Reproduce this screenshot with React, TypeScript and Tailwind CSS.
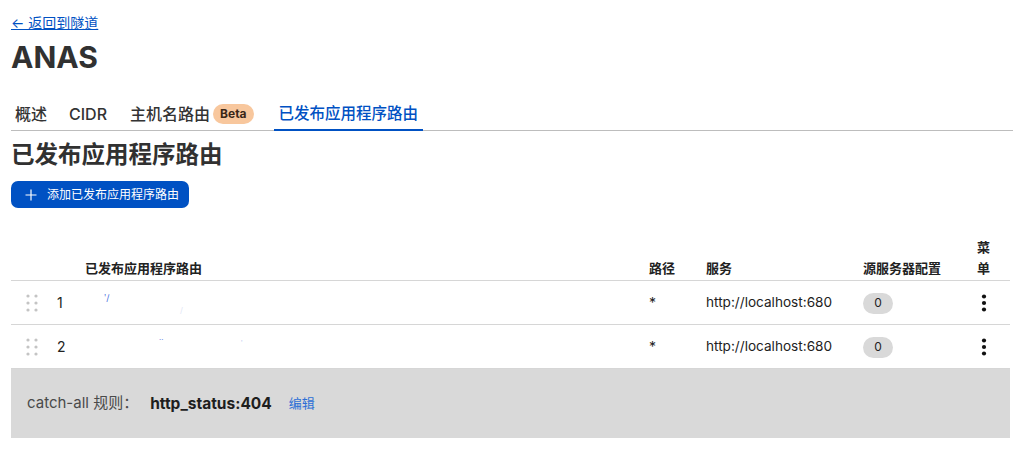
import React from "react";

const FONT = { fontFamily: 'Inter, "Noto Sans CJK SC", "Noto Sans", sans-serif' };

function DragHandle() {
  return (
    <svg width="12" height="18" viewBox="0 0 12 18" className="block">
      {[2, 9, 16].map((y) =>
        [2, 10].map((x) => <circle key={`${x}-${y}`} cx={x} cy={y} r="1.6" fill="#c4c4c4" />)
      )}
    </svg>
  );
}

function Kebab() {
  return (
    <svg width="6" height="18" viewBox="0 0 6 18" className="block">
      <circle cx="3" cy="2.5" r="2.1" fill="#111" />
      <circle cx="3" cy="9" r="2.1" fill="#111" />
      <circle cx="3" cy="15.5" r="2.1" fill="#111" />
    </svg>
  );
}

const cols = "grid grid-cols-[46px_28px_564px_57px_157px_114px_33px]";

function Row({ n, marks }: { n: number; marks: React.ReactNode }) {
  return (
    <div className={`${cols} h-[44px] items-center border-b border-[#d6d6d6] text-[14px] text-[#222]`}>
      <div className="pl-[15px]">
        <DragHandle />
      </div>
      <div>{n}</div>
      <div className="relative h-full">{marks}</div>
      <div>*</div>
      <div className="text-[13.6px]">http://localhost:680</div>
      <div>
        <span className="inline-flex h-[21px] w-[30px] items-center justify-center rounded-full bg-[#d9d9d9] text-[12px] text-[#222]">
          0
        </span>
      </div>
      <div className="pl-[4px]">
        <Kebab />
      </div>
    </div>
  );
}

export default function App() {
  return (
    <div className="min-h-[476px] bg-white px-[11px] pt-[14px] text-[#333]" style={FONT}>
      <a className="block text-[14px] leading-[18px] text-[#0051c3] underline">← 返回到隧道</a>
      <h1 className="mt-[5px] text-[30px] font-bold leading-[40px] text-[#313131]">ANAS</h1>

      <div className="mt-[25px] flex items-end gap-[13px] border-b border-[#bdbdbd]">
        <div className="-mb-px border-b-2 border-transparent px-[4px] pb-[3px] text-[16px] font-medium leading-[24px]">概述</div>
        <div className="-mb-px border-b-2 border-transparent px-[5px] pb-[3px] text-[16px] font-medium leading-[24px]">CIDR</div>
        <div className="-mb-px flex items-center border-b-2 border-transparent px-[5px] pb-[3px] text-[16px] font-medium leading-[24px]">
          主机名路由
          <span className="ml-[3px] inline-flex h-[20px] items-center rounded-full bg-[#f8c79d] px-[7px] text-[12px] font-bold leading-none text-[#3a2718]">
            Beta
          </span>
        </div>
        <div className="-mb-px ml-[2px] border-b-2 border-[#0051c3] px-[5px] pb-[3px] text-[15.5px] font-medium leading-[24px] text-[#0051c3]">
          已发布应用程序路由
        </div>
      </div>

      <h2 className="mt-[8px] text-[23.5px] font-bold leading-[32px] text-[#313131]">已发布应用程序路由</h2>

      <button className="mt-[10px] flex h-[27px] w-[178px] items-center rounded-[7px] bg-[#0051c3] pl-[14px] text-[12px] text-white">
        <svg width="12" height="12" viewBox="0 0 12 12" className="mr-[10px]">
          <path d="M6 0.5V11.5M0.5 6H11.5" stroke="white" strokeWidth="1.2" />
        </svg>
        添加已发布应用程序路由
      </button>

      <div className="mt-[29px] w-[999px]">
        <div className={`${cols} h-[44px] items-end border-b border-[#d6d6d6] pb-[6px] text-[13px] font-semibold leading-[21px] text-[#222]`}>
          <div />
          <div />
          <div>已发布应用程序路由</div>
          <div>路径</div>
          <div>服务</div>
          <div>源服务器配置</div>
          <div className="w-[14px] break-all">菜单</div>
        </div>
        <Row
          n={1}
          marks={
            <>
              <span className="absolute left-[19px] top-[12px] text-[9px] leading-none text-[#4a6fe0]">ʹ/</span>
              <span className="absolute left-[95px] top-[25px] text-[8px] leading-none text-[#dfe6f5]">/</span>
            </>
          }
        />
        <Row
          n={2}
          marks={
            <>
              <span className="absolute left-[74px] top-[13px] text-[9px] leading-none text-[#6a8ae6]">˙˙</span>
              <span className="absolute left-[156px] top-[14px] text-[8px] leading-none text-[#b3c4ef]">ˈ</span>
            </>
          }
        />
        <div className="flex h-[69px] items-center bg-[#d9d9d9] pl-[16px]">
          <span className="text-[15px] text-[#4a4a4a]">catch-all 规则：</span>
          <span className="ml-[12px] text-[15.5px] font-bold text-[#1e1e1e]">http_status:404</span>
          <span className="ml-[17px] text-[13px] text-[#2c6fd6]">编辑</span>
        </div>
      </div>
    </div>
  );
}
